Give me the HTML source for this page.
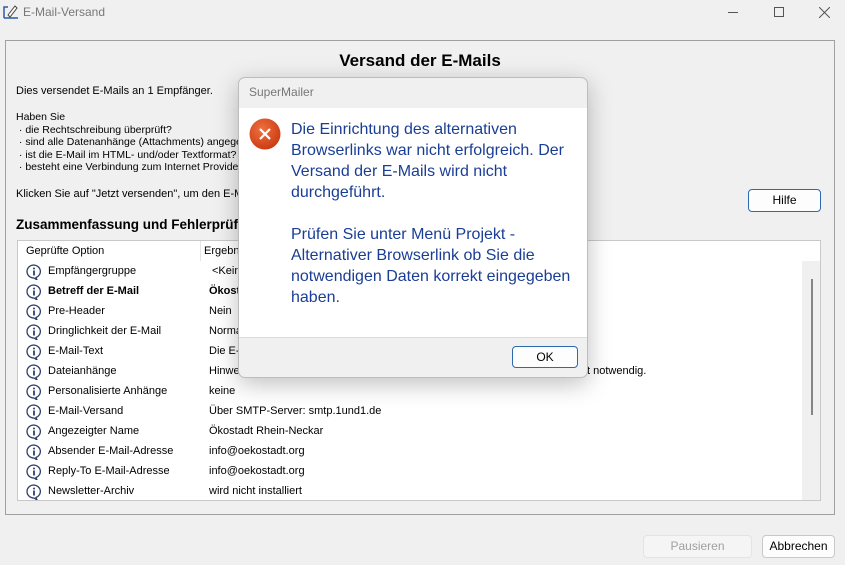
<!DOCTYPE html>
<html><head><meta charset="utf-8"><style>
*{margin:0;padding:0;box-sizing:border-box}
body{width:845px;height:565px;background:#f0f0f0;font-family:"Liberation Sans",sans-serif;font-size:11px;color:#000;position:relative;overflow:hidden}
.a{position:absolute;white-space:nowrap}
.row{position:absolute;left:0;width:784px;height:20px;line-height:20px}
.row .i{position:absolute;left:8px;top:3px}
.row .c1{position:absolute;left:30px}
.row .c2{position:absolute;left:191px}
.dlg{position:absolute;left:238px;top:77px;width:350px;height:301px;border:1px solid #bdbdbd;border-radius:7px;background:#f0f0f0;box-shadow:0 6px 24px rgba(0,0,0,.25);overflow:hidden}
.msg{color:#1a3e95;font-size:16px;line-height:21px;position:absolute;left:52px;top:41px;white-space:nowrap}
.btn{position:absolute;border:1px solid #c8c8c8;border-radius:4px;background:#fdfdfd;text-align:center;font-size:12px}
</style></head><body>
<svg class="a" style="left:3px;top:3px" width="16" height="16" viewBox="0 0 16 16"><path d="M1 15h14M1 15V4h4" stroke="#2a5aa8" stroke-width="1.5" fill="none"/><path d="M5 12l7-9 2 2-7 9z" fill="#fff" stroke="#444"/></svg>
<div class="a" style="left:23px;top:5px;color:#777;font-size:12px">E-Mail-Versand</div>
<div class="a" style="left:728px;top:12px;width:10px;height:1px;background:#555"></div>
<div class="a" style="left:774px;top:7px;width:10px;height:10px;border:1px solid #555"></div>
<svg class="a" style="left:819px;top:7px" width="11" height="11"><path d="M0 0L11 11M11 0L0 11" stroke="#555"/></svg>

<div class="a" style="left:5px;top:40px;width:830px;height:475px;border:1px solid #a0a0a0"></div>
<div class="a" style="left:5px;top:51px;width:830px;text-align:center;font-weight:bold;font-size:17px">Versand der E-Mails</div>
<div class="a" style="left:16px;top:85px">Dies versendet E-Mails an 1 Empfänger.</div>
<div class="a" style="left:16px;top:111px;line-height:12.5px;font-size:10.5px">Haben Sie<br>&nbsp;· die Rechtschreibung überprüft?<br>&nbsp;· sind alle Datenanhänge (Attachments) angegeben?<br>&nbsp;· ist die E-Mail im HTML- und/oder Textformat?<br>&nbsp;· besteht eine Verbindung zum Internet Provider?</div>
<div class="a" style="left:16px;top:188px">Klicken Sie auf "Jetzt versenden", um den E-Mail-Versand zu starten.</div>
<div class="btn" style="left:748px;top:189px;width:73px;height:23px;line-height:21px;border-color:#2c6ab0">Hilfe</div>
<div class="a" style="left:16px;top:217px;font-weight:bold;font-size:13.5px">Zusammenfassung und Fehlerprüfung</div>

<div class="a" style="left:17px;top:240px;width:804px;height:261px;background:#fff;border:1px solid #c8c8c8;overflow:hidden">
<div class="a" style="left:0;top:0;width:784px;height:20px;line-height:20px">
<span class="a" style="left:8px">Geprüfte Option</span><span class="a" style="left:182px;top:0;width:1px;height:20px;background:#e5e5e5"></span><span class="a" style="left:186px">Ergebnis</span></div>
<div class="a" style="left:784px;top:20px;width:18px;height:240px;background:#f0f0f0"></div>
<div class="a" style="left:793px;top:38px;width:2px;height:136px;background:#858585"></div>
<div style="position:absolute;left:0;top:20px">
<div class="row" style="top:0"><svg class="i" width="16" height="16" viewBox="0 0 16 16"><path d="M8 1a7 6.5 0 1 0 0 13l3 2-1-2.5A7 6.5 0 0 0 8 1z" fill="#fff" stroke="#2c3e6a" stroke-width="1.3"/><circle cx="8" cy="4.5" r="1" fill="#2c3e6a"/><path d="M8 6.5v5" stroke="#2c3e6a" stroke-width="1.8"/></svg><span class="c1">Empfängergruppe</span><span class="c2" style="left:194px">&lt;Keine&gt;</span></div>
<div class="row" style="top:20px;font-weight:bold"><svg class="i" width="16" height="16" viewBox="0 0 16 16"><path d="M8 1a7 6.5 0 1 0 0 13l3 2-1-2.5A7 6.5 0 0 0 8 1z" fill="#fff" stroke="#2c3e6a" stroke-width="1.3"/><circle cx="8" cy="4.5" r="1" fill="#2c3e6a"/><path d="M8 6.5v5" stroke="#2c3e6a" stroke-width="1.8"/></svg><span class="c1">Betreff der E-Mail</span><span class="c2">Ökostadt</span></div>
<div class="row" style="top:40px"><svg class="i" width="16" height="16" viewBox="0 0 16 16"><path d="M8 1a7 6.5 0 1 0 0 13l3 2-1-2.5A7 6.5 0 0 0 8 1z" fill="#fff" stroke="#2c3e6a" stroke-width="1.3"/><circle cx="8" cy="4.5" r="1" fill="#2c3e6a"/><path d="M8 6.5v5" stroke="#2c3e6a" stroke-width="1.8"/></svg><span class="c1">Pre-Header</span><span class="c2">Nein</span></div>
<div class="row" style="top:60px"><svg class="i" width="16" height="16" viewBox="0 0 16 16"><path d="M8 1a7 6.5 0 1 0 0 13l3 2-1-2.5A7 6.5 0 0 0 8 1z" fill="#fff" stroke="#2c3e6a" stroke-width="1.3"/><circle cx="8" cy="4.5" r="1" fill="#2c3e6a"/><path d="M8 6.5v5" stroke="#2c3e6a" stroke-width="1.8"/></svg><span class="c1">Dringlichkeit der E-Mail</span><span class="c2">Normal</span></div>
<div class="row" style="top:80px"><svg class="i" width="16" height="16" viewBox="0 0 16 16"><path d="M8 1a7 6.5 0 1 0 0 13l3 2-1-2.5A7 6.5 0 0 0 8 1z" fill="#fff" stroke="#2c3e6a" stroke-width="1.3"/><circle cx="8" cy="4.5" r="1" fill="#2c3e6a"/><path d="M8 6.5v5" stroke="#2c3e6a" stroke-width="1.8"/></svg><span class="c1">E-Mail-Text</span><span class="c2">Die E-Mail</span></div>
<div class="row" style="top:100px"><svg class="i" width="16" height="16" viewBox="0 0 16 16"><path d="M8 1a7 6.5 0 1 0 0 13l3 2-1-2.5A7 6.5 0 0 0 8 1z" fill="#fff" stroke="#2c3e6a" stroke-width="1.3"/><circle cx="8" cy="4.5" r="1" fill="#2c3e6a"/><path d="M8 6.5v5" stroke="#2c3e6a" stroke-width="1.8"/></svg><span class="c1">Dateianhänge</span><span class="c2">Hinweis</span><span class="a" style="left:569px">t notwendig.</span></div>
<div class="row" style="top:120px"><svg class="i" width="16" height="16" viewBox="0 0 16 16"><path d="M8 1a7 6.5 0 1 0 0 13l3 2-1-2.5A7 6.5 0 0 0 8 1z" fill="#fff" stroke="#2c3e6a" stroke-width="1.3"/><circle cx="8" cy="4.5" r="1" fill="#2c3e6a"/><path d="M8 6.5v5" stroke="#2c3e6a" stroke-width="1.8"/></svg><span class="c1">Personalisierte Anhänge</span><span class="c2">keine</span></div>
<div class="row" style="top:140px"><svg class="i" width="16" height="16" viewBox="0 0 16 16"><path d="M8 1a7 6.5 0 1 0 0 13l3 2-1-2.5A7 6.5 0 0 0 8 1z" fill="#fff" stroke="#2c3e6a" stroke-width="1.3"/><circle cx="8" cy="4.5" r="1" fill="#2c3e6a"/><path d="M8 6.5v5" stroke="#2c3e6a" stroke-width="1.8"/></svg><span class="c1">E-Mail-Versand</span><span class="c2">Über SMTP-Server: smtp.1und1.de</span></div>
<div class="row" style="top:160px"><svg class="i" width="16" height="16" viewBox="0 0 16 16"><path d="M8 1a7 6.5 0 1 0 0 13l3 2-1-2.5A7 6.5 0 0 0 8 1z" fill="#fff" stroke="#2c3e6a" stroke-width="1.3"/><circle cx="8" cy="4.5" r="1" fill="#2c3e6a"/><path d="M8 6.5v5" stroke="#2c3e6a" stroke-width="1.8"/></svg><span class="c1">Angezeigter Name</span><span class="c2">Ökostadt Rhein-Neckar</span></div>
<div class="row" style="top:180px"><svg class="i" width="16" height="16" viewBox="0 0 16 16"><path d="M8 1a7 6.5 0 1 0 0 13l3 2-1-2.5A7 6.5 0 0 0 8 1z" fill="#fff" stroke="#2c3e6a" stroke-width="1.3"/><circle cx="8" cy="4.5" r="1" fill="#2c3e6a"/><path d="M8 6.5v5" stroke="#2c3e6a" stroke-width="1.8"/></svg><span class="c1">Absender E-Mail-Adresse</span><span class="c2">info@oekostadt.org</span></div>
<div class="row" style="top:200px"><svg class="i" width="16" height="16" viewBox="0 0 16 16"><path d="M8 1a7 6.5 0 1 0 0 13l3 2-1-2.5A7 6.5 0 0 0 8 1z" fill="#fff" stroke="#2c3e6a" stroke-width="1.3"/><circle cx="8" cy="4.5" r="1" fill="#2c3e6a"/><path d="M8 6.5v5" stroke="#2c3e6a" stroke-width="1.8"/></svg><span class="c1">Reply-To E-Mail-Adresse</span><span class="c2">info@oekostadt.org</span></div>
<div class="row" style="top:220px"><svg class="i" width="16" height="16" viewBox="0 0 16 16"><path d="M8 1a7 6.5 0 1 0 0 13l3 2-1-2.5A7 6.5 0 0 0 8 1z" fill="#fff" stroke="#2c3e6a" stroke-width="1.3"/><circle cx="8" cy="4.5" r="1" fill="#2c3e6a"/><path d="M8 6.5v5" stroke="#2c3e6a" stroke-width="1.8"/></svg><span class="c1">Newsletter-Archiv</span><span class="c2">wird nicht installiert</span></div>
</div>
</div>

<div class="btn" style="left:643px;top:535px;width:109px;height:23px;line-height:21px;color:#a0a0a0;background:#f5f5f5;border-color:#e3e3e3">Pausieren</div>
<div class="btn" style="left:762px;top:535px;width:73px;height:23px;line-height:21px">Abbrechen</div>

<div class="dlg">
<div class="a" style="left:10px;top:7px;color:#777;font-size:12px">SuperMailer</div>
<div class="a" style="left:0;top:30px;width:350px;height:229px;background:#fff"></div>
<svg class="a" style="left:10px;top:40px" width="32" height="32"><defs><radialGradient id="g" cx="40%" cy="35%" r="70%"><stop offset="0" stop-color="#f07040"/><stop offset="1" stop-color="#c83a10"/></radialGradient></defs><circle cx="16" cy="16" r="15.5" fill="url(#g)"/><path d="M11 11l10 10M21 11l-10 10" stroke="#fff" stroke-width="2.2"/></svg>
<div class="msg">Die Einrichtung des alternativen<br>Browserlinks war nicht erfolgreich. Der<br>Versand der E-Mails wird nicht<br>durchgeführt.<br><br>Prüfen Sie unter Menü Projekt -<br>Alternativer Browserlink ob Sie die<br>notwendigen Daten korrekt eingegeben<br>haben.</div>
<div class="a" style="left:0;top:259px;width:350px;height:1px;background:#dcdcdc"></div>
<div class="btn" style="left:273px;top:268px;width:66px;height:22px;line-height:20px;border-color:#2c6ab0">OK</div>
</div>
</body></html>
